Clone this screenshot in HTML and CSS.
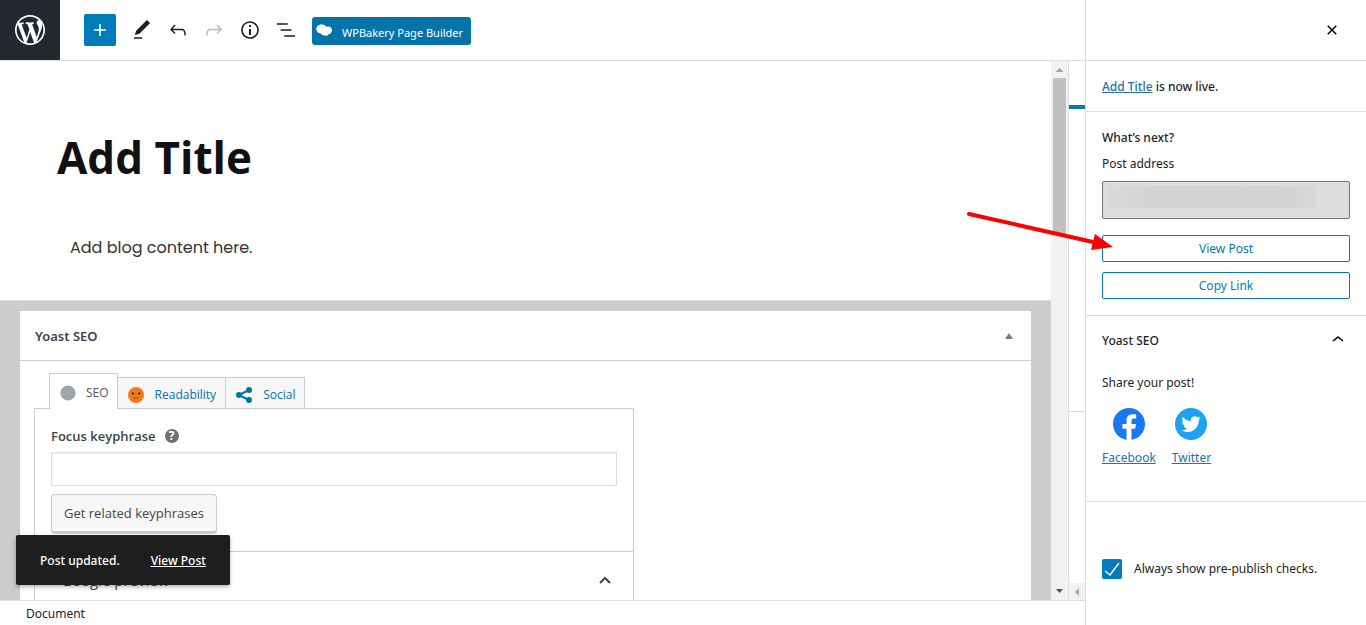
FILE: index.html
```html
<!DOCTYPE html>
<html lang="en">
<head>
<meta charset="UTF-8" />
<meta name="viewport" content="width=device-width, initial-scale=1" />
<title>Edit Post</title>
<link rel="stylesheet" href="styles.css">
</head>
<body>
  <div class="editor">
    <header class="toolbar">
      <a class="wp-logo" href="#" aria-label="View Posts">
        <svg width="30" height="30" viewBox="0 0 20 20"><path d="M20 10c0-5.51-4.49-10-10-10C4.48 0 0 4.49 0 10c0 5.52 4.48 10 10 10 5.51 0 10-4.48 10-10zM7.78 15.37L4.37 6.22c.55-.02 1.17-.08 1.17-.08.5-.06.44-1.13-.06-1.11 0 0-1.45.11-2.37.11-.18 0-.37 0-.58-.01C4.12 2.69 6.87 1.11 10 1.11c2.33 0 4.45.87 6.05 2.34-.68-.11-1.65.39-1.65 1.58 0 .74.45 1.36.9 2.1.35.61.55 1.36.55 2.46 0 1.49-1.4 5-1.4 5l-3.03-8.37c.54-.02.82-.17.82-.17.5-.05.44-1.25-.06-1.22 0 0-1.44.12-2.38.12-.87 0-2.33-.12-2.33-.12-.5-.03-.56 1.2-.06 1.22l.92.08 1.26 3.41zM17.41 10c.24-.64.74-1.87.43-4.25.7 1.29 1.05 2.71 1.05 4.25 0 3.29-1.73 6.24-4.4 7.78.97-2.59 1.94-5.2 2.92-7.78zM6.1 18.09C3.12 16.65 1.11 13.53 1.11 10c0-1.3.23-2.48.72-3.59C3.25 10.3 4.67 14.2 6.1 18.09zm4.03-6.63l2.58 6.98c-.86.29-1.76.45-2.71.45-.79 0-1.57-.11-2.29-.33.81-2.38 1.62-4.74 2.42-7.1z"/></svg>
      </a>
      <button class="add-block" type="button" aria-label="Add block">
        <svg width="24" height="24" viewBox="0 0 24 24"><path d="M18 11.2h-5.2V6h-1.6v5.2H6v1.6h5.2V18h1.6v-5.2H18z"/></svg>
      </button>
      <div class="tools">
        <button class="tool" type="button" aria-label="Tools">
          <svg width="24" height="24" viewBox="0 0 24 24"><path d="M20.1 5.1L16.9 2 6.2 12.7l-1.3 4.4 4.5-1.3L20.1 5.1zM4 20.8h8v-1.5H4v1.5z"/></svg>
        </button>
        <button class="tool" type="button" aria-label="Undo">
          <svg width="24" height="24" viewBox="0 0 24 24"><path d="M18.3 11.7c-.6-.6-1.4-.9-2.3-.9H6.7l2.9-3.3-1.1-1-4.5 5L8.5 16l1-1-2.7-2.7H16c.5 0 .9.2 1.3.5 1 1 1 3.4 1 4.5v.3h1.5v-.2c0-1.5 0-4.3-1.5-5.7z"/></svg>
        </button>
        <button class="tool" type="button" aria-label="Redo" disabled>
          <svg width="24" height="24" viewBox="0 0 24 24"><path d="M15.6 6.5l-1.1 1 2.9 3.3H8c-.9 0-1.7.3-2.3.9-1.4 1.5-1.4 4.2-1.4 5.6v.2h1.5v-.3c0-1.1 0-3.5 1-4.5.3-.3.7-.5 1.3-.5h9.2L14.5 15l1.1 1.1 4.6-4.6-4.6-5z"/></svg>
        </button>
        <button class="tool" type="button" aria-label="Details">
          <svg width="24" height="24" viewBox="0 0 24 24"><path d="M12 3.2c-4.8 0-8.8 3.9-8.8 8.8 0 4.8 3.9 8.8 8.8 8.8 4.8 0 8.8-3.9 8.8-8.8 0-4.8-4-8.8-8.8-8.8zm0 16c-4 0-7.2-3.3-7.2-7.2C4.8 8 8 4.8 12 4.8s7.2 3.3 7.2 7.2c0 4-3.2 7.2-7.2 7.2zM11 17h2v-6h-2v6zm0-8h2V7h-2v2z"/></svg>
        </button>
        <button class="tool" type="button" aria-label="List view">
          <svg width="24" height="24" viewBox="0 0 24 24"><path d="M13.8 5.2H3v1.5h10.8V5.2zm-3.6 12v1.5H21v-1.5H10.2zm7.2-6H6.6v1.5h10.8v-1.5z"/></svg>
        </button>
      </div>
      <button class="wpbakery" type="button">
        <svg width="18" height="14" viewBox="0 0 18 14"><path d="M5.500.5C8 .3 9.600 1.300 10.300 3c2.500-1.100 5.700.2 5.700 3.200 0 2.400-1.600 3.800-3.600 4-.5 1.600-2.600 1.900-3.900 1.100-1.600.5-3-.3-3.400-1.700C2.300 9.400.3 7.500.3 5 .3 2.500 2.500.6 5.500.5z"/></svg>
        <span>WPBakery Page Builder</span>
      </button>
    </header>

    <div class="workspace">
      <main class="canvas">
        <section class="post">
          <h1>Add Title</h1>
          <p>Add blog content here.</p>
        </section>
        <section class="metaboxes">
          <div class="metabox">
            <div class="metabox-header">
              <h2>Yoast SEO</h2>
              <button class="toggle" type="button" aria-label="Toggle panel: Yoast SEO">
                <svg width="8" height="6" viewBox="0 0 8 6"><path d="M4 0l4 6H0z"/></svg>
              </button>
            </div>
            <div class="yoast">
              <div class="tabs" role="tablist">
                <button class="tab active" type="button" role="tab" aria-selected="true">
                  <svg width="16" height="16" viewBox="0 0 16 16"><circle cx="8" cy="8" r="7.600" fill="#a0a5aa"/></svg>
                  <span>SEO</span>
                </button>
                <button class="tab" type="button" role="tab" aria-selected="false">
                  <svg width="16" height="16" viewBox="0 0 16 16"><circle cx="8" cy="8" r="8" fill="#ee7c1b"/><circle cx="5" cy="6.500" r="1" fill="#000"/><circle cx="11" cy="6.500" r="1" fill="#000"/><path d="M3.500 5l2.500 1M12.500 5L10 6" stroke="#c55c0a" stroke-width=".7"/><rect x="5" y="10" width="6" height="1.800" fill="#a56b3c"/></svg>
                  <span>Readability</span>
                </button>
                <button class="tab" type="button" role="tab" aria-selected="false">
                  <svg width="16" height="16" viewBox="0 0 16 16"><path d="M13 3L3 8l10 5" fill="none" stroke="#0073aa" stroke-width="2"/><g fill="#0073aa"><circle cx="13" cy="3" r="3"/><circle cx="3" cy="8" r="3"/><circle cx="13" cy="13" r="3"/></g></svg>
                  <span>Social</span>
                </button>
              </div>
              <div class="tab-panel">
                <div class="keyphrase">
                  <div class="keyphrase-label">
                    <label for="focus-keyphrase">Focus keyphrase</label>
                    <button class="help" type="button" aria-label="Help">?</button>
                  </div>
                  <input id="focus-keyphrase" type="text">
                  <button class="related" type="button">Get related keyphrases</button>
                </div>
                <button class="preview-toggle" type="button">
                  <span>Google preview</span>
                  <svg width="12" height="8" viewBox="0 0 12 8"><path d="M1 7l5-5 5 5" fill="none" stroke="#444" stroke-width="2"/></svg>
                </button>
              </div>
            </div>
          </div>
        </section>
      </main>
      <div class="scrollbar" aria-hidden="true">
        <svg width="17" height="17" viewBox="0 0 17 17"><path d="M8.500 7l4 4h-8z" fill="#a3a3a3"/></svg>
        <div class="thumb"></div>
        <svg class="down" width="17" height="17" viewBox="0 0 17 17"><path d="M5 6h7l-3.500 4z" fill="#505050"/></svg>
      </div>
      <aside class="sidebar" aria-hidden="true">
        <div class="sidebar-tab"></div>
        <div class="sidebar-body"></div>
        <svg width="16" height="17" viewBox="0 0 16 17"><path d="M10 5v8L6 9z" fill="#a3a3a3"/></svg>
      </aside>
      <div class="snackbar" role="status">
        <span>Post updated.</span>
        <a href="#">View Post</a>
      </div>
    </div>

    <footer class="breadcrumb">Document</footer>
  </div>

  <aside class="publish">
    <svg class="arrow" width="148" height="40" viewBox="0 0 148 40" aria-hidden="true"><path d="M3 4l124 28" stroke="#f00" stroke-width="4" stroke-linecap="round"/><path d="M129 24l18 13-22 3z" fill="#f00"/></svg>
    <div class="publish-header">
      <button class="close" type="button" aria-label="Close panel">
        <svg width="24" height="24" viewBox="0 0 24 24"><path d="M12 13.060l3.712 3.713 1.061-1.060L13.061 12l3.712-3.712-1.060-1.060L12 10.938 8.288 7.227l-1.061 1.060L10.939 12l-3.712 3.712 1.060 1.061L12 13.061z"/></svg>
      </button>
    </div>
    <p class="live"><a href="#">Add Title</a> is now live.</p>
    <section class="next">
      <h2>What’s next?</h2>
      <label for="post-address">Post address</label>
      <div class="address">
        <input id="post-address" type="text" readonly>
        <span class="redacted"></span>
      </div>
      <div class="actions">
        <button type="button">View Post</button>
        <button type="button">Copy Link</button>
      </div>
    </section>
    <section class="share">
      <button class="share-toggle" type="button" aria-expanded="true">
        <span>Yoast SEO</span>
        <svg width="24" height="24" viewBox="0 0 24 24"><path d="M6.500 12.400L12 8l5.500 4.400-.9 1.200L12 10l-4.500 3.600-1-1.200z"/></svg>
      </button>
      <p>Share your post!</p>
      <div class="networks">
        <a href="#">
          <svg width="32" height="32" viewBox="0 0 24 24"><path fill="#1877f2" d="M24 12.073c0-6.627-5.373-12-12-12s-12 5.373-12 12c0 5.990 4.388 10.954 10.125 11.854v-8.385H7.078v-3.470h3.047V9.430c0-3.007 1.792-4.669 4.533-4.669 1.312 0 2.686.235 2.686.235v2.953H15.830c-1.491 0-1.956.925-1.956 1.874v2.250h3.328l-.532 3.470h-2.796v8.385C19.612 23.027 24 18.062 24 12.073z"/></svg>
          <span>Facebook</span>
        </a>
        <a href="#">
          <svg width="32" height="32" viewBox="0 0 32 32"><circle cx="16" cy="16" r="16" fill="#1da1f2"/><path transform="translate(6.500 6.500) scale(.8)" fill="#fff" d="M23.953 4.570a10 10 0 01-2.825.775 4.958 4.958 0 002.163-2.723c-.951.555-2.005.959-3.127 1.184a4.920 4.920 0 00-8.384 4.482C7.690 8.095 4.067 6.130 1.640 3.162a4.822 4.822 0 00-.666 2.475c0 1.710.870 3.213 2.188 4.096a4.904 4.904 0 01-2.228-.616v.060a4.923 4.923 0 003.946 4.827 4.996 4.996 0 01-2.212.085 4.936 4.936 0 004.604 3.417 9.867 9.867 0 01-6.102 2.105c-.390 0-.779-.023-1.170-.067a13.995 13.995 0 007.557 2.209c9.053 0 13.998-7.496 13.998-13.985 0-.210 0-.420-.015-.630A9.935 9.935 0 0024 4.590z"/></svg>
          <span>Twitter</span>
        </a>
      </div>
    </section>
    <label class="checks">
      <input type="checkbox" checked>
      <svg width="20" height="20" viewBox="0 0 20 20" aria-hidden="true"><path d="M3 12l5 4L17 4" fill="none" stroke="#fff" stroke-width="1.500"/></svg>
      <span>Always show pre-publish checks.</span>
    </label>
  </aside>
</body>
</html>
```

FILE: styles.css
```css
:root {
  --blue: #007cba;
  --link: #2271b1;
  --text: #1e1e1e;
  --border: #ddd;
  --gray: #ccc;
  --font-family: "Segoe UI", "Noto Sans", "Open Sans", sans-serif;
}
* {
  box-sizing: border-box;
}
body {
  margin: 0;
  height: 100vh;
  display: flex;
  overflow: hidden;
  background: #fff;
  color: var(--text);
  font-family: var(--font-family);
  font-size: 12px;
  line-height: 18px;
}
button, input {
  font: inherit;
  color: inherit;
}
button {
  padding: 0;
  border: 0;
  background: none;
  cursor: pointer;
}
h1, h2, p {
  margin: 0;
}
svg {
  display: block;
  flex: none;
}
.editor {
  flex: 1;
  min-width: 0;
  display: flex;
  flex-direction: column;
}

/* Top toolbar */
.toolbar {
  display: flex;
  align-items: center;
  height: 61px;
  gap: 8px;
  border-bottom: 1px solid var(--border);
}
.wp-logo {
  display: flex;
  align-items: center;
  justify-content: center;
  width: 60px;
  height: 60px;
  margin-right: 16px;
  background: #23282e;
  fill: #fff;
}
.add-block {
  display: flex;
  align-items: center;
  justify-content: center;
  width: 32px;
  height: 32px;
  border-radius: 2px;
  background: var(--blue);
  fill: #fff;
}
.tools {
  display: flex;
}
.tool {
  display: flex;
  align-items: center;
  justify-content: center;
  width: 36px;
  height: 36px;
  fill: var(--text);
}
.tool:disabled {
  opacity: 0.3;
}
.wpbakery {
  display: flex;
  align-items: center;
  gap: 8px;
  height: 28px;
  margin-top: 2px;
  padding: 0 8px 0 4px;
  border-radius: 3px;
  background: #0473aa;
  color: #fff;
  fill: #fff;
  font-size: 11px;
}
.wpbakery span {
  padding-top: 3px;
}

/* Post canvas */
.workspace {
  position: relative;
  flex: 1;
  min-height: 0;
  display: flex;
}
.canvas {
  flex: 1;
  min-width: 0;
  overflow: hidden;
}
.post {
  padding: 64px 57px 39px;
}
.post h1 {
  font-family: "Segoe UI", "Open Sans", sans-serif;
  font-size: 44px;
  line-height: 64px;
  font-weight: 700;
  color: #111;
}
.post p {
  padding: 45px 13px 0;
  font-family: Poppins, Inter, sans-serif;
  font-size: 16px;
  line-height: 27px;
  color: #333;
}
.metaboxes {
  padding: 10px 20px 0;
  border-top: 1px solid var(--border);
  background: var(--gray);
}
.metabox {
  background: #fff;
}
.metabox-header {
  display: flex;
  align-items: center;
  justify-content: space-between;
  height: 50px;
  padding: 0 18px 0 15px;
  border-bottom: 1px solid var(--gray);
}
.metabox-header h2 {
  font-size: 13px;
  font-weight: 600;
  color: #3c434a;
}
.toggle {
  fill: #787c82;
}

/* Yoast metabox */
.yoast {
  max-width: 628px;
  padding: 12px 14px 0;
  color: #444;
  font-family: "Segoe UI", "Open Sans", sans-serif;
}
.tabs {
  display: flex;
  align-items: flex-end;
  padding-left: 15px;
}
.tab {
  display: flex;
  align-items: center;
  gap: 11px;
  height: 31px;
  padding: 3px 9px 0 10px;
  border: 1px solid var(--gray);
  border-left: 0;
  border-bottom: 0;
  background: #f7f7f7;
  color: #0073aa;
}
.tab.active {
  position: relative;
  gap: 10px;
  height: 36px;
  margin-bottom: -1px;
  padding: 2px 8px 0 10px;
  border-left: 1px solid var(--gray);
  background: #fff;
  color: #555;
}
.tab-panel {
  border: 1px solid var(--gray);
}
.keyphrase {
  display: flex;
  flex-direction: column;
  align-items: flex-start;
  gap: 8px;
  padding: 17px 16px;
}
.keyphrase-label {
  display: flex;
  align-items: center;
  gap: 9px;
  padding-top: 1px;
  height: 18px;
  color: #3c434a;
  font-size: 13px;
  font-weight: 600;
}
.help {
  width: 14px;
  height: 14px;
  border-radius: 50%;
  background: #707070;
  color: #fff;
  font-size: 12px;
  line-height: 14px;
  font-weight: 700;
}
.keyphrase input {
  width: 100%;
  height: 34px;
  padding: 0 8px;
  border: 1px solid var(--border);
  box-shadow: inset 0 1px 2px rgba(0, 0, 0, 0.07);
}
.related {
  height: 40px;
  padding: 0 12px;
  border: 1px solid var(--gray);
  border-bottom-width: 3px;
  border-radius: 4px;
  background: #f7f7f7;
  font-size: 13px;
}
.preview-toggle {
  display: flex;
  align-items: center;
  justify-content: space-between;
  width: 100%;
  height: 56px;
  padding: 0 22px 0 26px;
  border-top: 1px solid var(--gray);
  font-size: 15px;
}

/* Scrollbars */
.scrollbar {
  display: flex;
  flex-direction: column;
  align-items: center;
  width: 17px;
  background: #f1f1f1;
}
.thumb {
  width: 13px;
  height: 29%;
  background: #c1c1c1;
}
.scrollbar .down {
  margin-top: auto;
}
.sidebar {
  display: flex;
  flex-direction: column;
  width: 17px;
  border-left: 1px solid var(--border);
}
.sidebar-tab {
  height: 48px;
  border-bottom: 4px solid var(--blue);
}
.sidebar-body {
  height: 303px;
  border-bottom: 1px solid var(--border);
}
.sidebar svg {
  margin-top: auto;
  background: #f1f1f1;
}
.snackbar {
  position: absolute;
  left: 16px;
  bottom: 15px;
  display: flex;
  gap: 31px;
  padding: 17px 24px 15px;
  border-radius: 2px;
  background: var(--text);
  box-shadow: 0 2px 4px rgba(0, 0, 0, 0.3);
  color: #fff;
  font-weight: 500;
}
.snackbar a {
  color: inherit;
}
.breadcrumb {
  height: 25px;
  padding: 4px 26px 2px;
  border-top: 1px solid var(--border);
}

/* Post-publish panel */
.publish {
  position: relative;
  width: 281px;
  border-left: 1px solid var(--border);
}
.publish a {
  color: var(--link);
}
.arrow {
  position: absolute;
  top: 210px;
  left: -120px;
  overflow: visible;
  pointer-events: none;
}
.publish-header {
  display: flex;
  align-items: center;
  justify-content: flex-end;
  height: 61px;
  padding: 0 22px;
  border-bottom: 1px solid var(--border);
}
.live {
  padding: 17px 16px 15px;
  border-bottom: 1px solid var(--border);
  font-weight: 500;
}
.next {
  display: flex;
  flex-direction: column;
  gap: 8px;
  padding: 17px 16px 16px;
  border-bottom: 1px solid var(--border);
}
.next h2 {
  font-size: 12px;
  font-weight: 500;
}
.address {
  position: relative;
}
.address input {
  display: block;
  width: 100%;
  height: 38px;
  padding: 0 8px;
  border: 1px solid #757575;
  border-radius: 2px;
  background: var(--border);
}
.redacted {
  position: absolute;
  inset: 5px 34px 11px 4px;
  background: linear-gradient(90deg, #dadada, #d2d2d2 25%, #d3d3d3 85%, #d8d8d8);
}
.actions {
  display: flex;
  flex-direction: column;
  gap: 10px;
  padding-top: 8px;
}
.actions button {
  height: 27px;
  border: 1px solid var(--blue);
  border-radius: 2px;
  color: var(--blue);
}
.share {
  padding: 0 16px 34px;
  border-bottom: 1px solid var(--border);
}
.share-toggle {
  display: flex;
  align-items: center;
  justify-content: space-between;
  width: 100%;
  height: 48px;
  font-weight: 500;
}
.share-toggle span {
  padding-top: 2px;
}
.share p {
  padding: 10px 0 16px;
}
.networks {
  display: flex;
  gap: 16px;
}
.networks a {
  display: flex;
  flex-direction: column;
  align-items: center;
  gap: 9px;
}
.checks {
  position: relative;
  display: flex;
  align-items: center;
  gap: 12px;
  padding: 57px 16px;
}
.checks input {
  appearance: none;
  width: 20px;
  height: 20px;
  margin: 0;
  border-radius: 2px;
  background: var(--blue);
}
.checks svg {
  position: absolute;
  left: 16px;
}
```
